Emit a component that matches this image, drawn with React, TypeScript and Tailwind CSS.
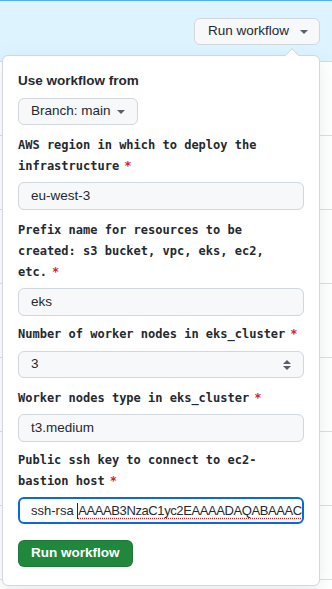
import * as React from "react";

const sans = "font-['Liberation_Sans',Arial,sans-serif]";
const mono = "font-['DejaVu_Sans_Mono','Liberation_Mono',monospace]";

const Caret = ({ className = "" }: { className?: string }) => (
  <svg viewBox="0 0 8 4" width="8" height="4" className={className}>
    <path d="M0 0h8L4 4z" fill="#57606a" />
  </svg>
);

const Label = ({ text }: { text: string }) => (
  <div className={`${mono} text-[12px] leading-[21px] font-bold text-[#24292f]`}>
    {text}
    <span className="ml-[5px] text-[#cf222e]">*</span>
  </div>
);

const Field = ({ label, value }: { label: string; value: string }) => (
  <div className="mt-[10px]">
    <Label text={label} />
    <div className="mt-[5px] flex h-[28px] items-center rounded-md border border-[#d0d7de] bg-[#f6f8fa] px-[12px] text-[13.5px] text-[#24292f]">
      {value}
    </div>
  </div>
);

const rows = [0, 1, 2, 3, 4, 5, 6];

const App = () => {
  return (
    <div className={`${sans} relative h-[589px] w-[332px] overflow-hidden bg-white`}>
      <div className="flex h-[62px] items-start justify-end border-t border-b border-t-[#54aeff] border-b-[#b6e3ff] bg-[#ddf4ff] pt-[17px] pr-[12px]">
        <button className="flex h-[27px] items-center gap-[11px] rounded-md border border-[#d0d7de] bg-[#f6f8fa] pr-[11px] pl-[13px] text-[13.5px] text-[#24292f]">
          Run workflow
          <Caret />
        </button>
      </div>
      {rows.map((r) => (
        <div key={r} className="h-[74px] border-b border-[#d8dee4]" />
      ))}

      <div className="absolute top-[55px] left-[2px] w-[318px] rounded-md border border-[#d0d7de] bg-white px-[15px] pt-[15px] pb-[18px] shadow-[0_6px_18px_rgba(140,149,159,0.18)]">
        <div className="absolute -top-[6px] right-[22px] h-[10px] w-[10px] rotate-45 border-t border-l border-[#d0d7de] bg-white" />
        <div className="text-[13.5px] leading-[20px] font-semibold text-[#24292f]">Use workflow from</div>
        <button className="mt-[7px] flex h-[27px] items-center gap-[6px] rounded-md border border-[#d0d7de] bg-[#f6f8fa] px-[12px] text-[13.5px] text-[#24292f]">
          Branch: main
          <Caret />
        </button>

        <Field label="AWS region in which to deploy the infrastructure" value="eu-west-3" />
        <Field label="Prefix name for resources to be created: s3 bucket, vpc, eks, ec2, etc." value="eks" />

        <div className="mt-[8px]">
          <Label text="Number of worker nodes in eks_cluster" />
          <div className="mt-[6px] flex h-[27px] items-center justify-between rounded-md border border-[#d0d7de] bg-[#f6f8fa] px-[12px] text-[13.5px] text-[#24292f]">
            3
            <svg viewBox="0 0 8 12" width="8" height="12">
              <path d="M0 5L4 1L8 5z M0 7h8L4 11z" fill="#57606a" />
            </svg>
          </div>
        </div>

        <Field label="Worker nodes type in eks_cluster" value="t3.medium" />

        <div className="mt-[8px]">
          <Label text="Public ssh key to connect to ec2-bastion host" />
          <div className="mt-[5px] flex h-[27px] items-center overflow-hidden rounded-md border-2 border-[#0969da] bg-white pr-[8px] pl-[11px] text-[13px] whitespace-nowrap text-[#24292f]">
            <span>ssh-rsa&nbsp;</span>
            <span className="h-[16px] w-px shrink-0 bg-[#24292f]" />
            <span className="tracking-[-0.4px] underline decoration-[#cf222e] decoration-dotted underline-offset-[3px]">
              AAAAB3NzaC1yc2EAAAADAQABAAAC
            </span>
          </div>
        </div>

        <button className="mt-[16px] flex h-[27px] items-center rounded-md border border-[rgba(31,35,40,0.15)] bg-[#1f883d] px-[12px] text-[13.5px] font-semibold text-white">
          Run workflow
        </button>
      </div>
    </div>
  );
};

export default App;
